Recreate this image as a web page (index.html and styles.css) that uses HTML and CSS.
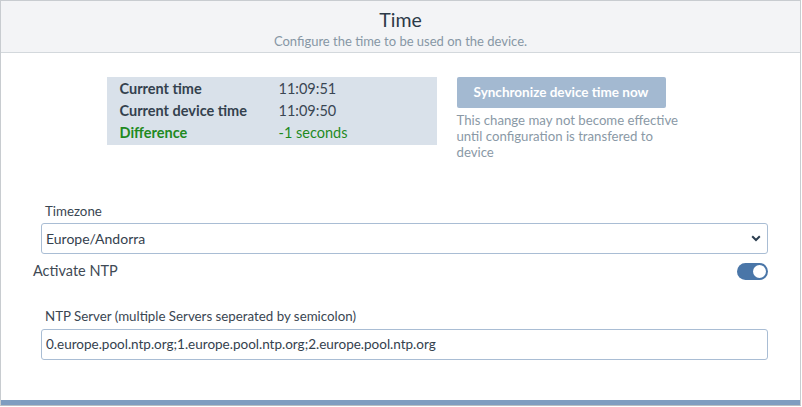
FILE: index.html
```html
<!DOCTYPE html>
<html>
<head>
<meta charset="utf-8">
<link rel="stylesheet" href="styles.css">
</head>
<body>
<div class="panel">
  <div class="header">
    <div class="title">Time</div>
    <div class="subtitle">Configure the time to be used on the device.</div>
  </div>
  <div class="content">
    <div class="info-row">
      <div class="info-box">
        <div class="irow"><span class="lbl">Current time</span><span class="val">11:09:51</span></div>
        <div class="irow"><span class="lbl">Current device time</span><span class="val">11:09:50</span></div>
        <div class="irow diff"><span class="lbl">Difference</span><span class="val">-1 seconds</span></div>
      </div>
      <div class="sync">
        <div class="btn">Synchronize device time now</div>
        <div class="help">This change may not become effective until configuration is transfered to device</div>
      </div>
    </div>
    <div class="group tz">
      <div class="flabel">Timezone</div>
      <div class="field select">
        <span>Europe/Andorra</span>
        <svg class="chev" width="10" height="7" viewBox="0 0 10 7"><path d="M1.2 1.3 L5 5 L8.8 1.3" fill="none" stroke="#2c3e50" stroke-width="2"/></svg>
      </div>
    </div>
    <div class="ntp-row">
      <span class="ntp-label">Activate NTP</span>
      <span class="toggle"><span class="knob"></span></span>
    </div>
    <div class="group ntp">
      <div class="flabel">NTP Server (multiple Servers seperated by semicolon)</div>
      <div class="field">0.europe.pool.ntp.org;1.europe.pool.ntp.org;2.europe.pool.ntp.org</div>
    </div>
  </div>
  <div class="footer"></div>
</div>
</body>
</html>
```
FILE: styles.css
```css
html, body {
  margin: 0;
  padding: 0;
  background: #ffffff;
}
body {
  font-family: Lato, "Liberation Sans", sans-serif;
  color: #2f3d4b;
  width: 802px;
  height: 407px;
  overflow: hidden;
}
.panel {
  width: 801px;
  height: 406px;
  box-sizing: border-box;
  border: 1px solid #c8ccd0;
  border-bottom: 1px solid #b9bec3;
  display: flex;
  flex-direction: column;
}
.header {
  height: 52px;
  box-sizing: border-box;
  background: #f3f4f6;
  border-bottom: 1px solid #d3d8dc;
  text-align: center;
  padding-top: 7px;
}
.title {
  font-size: 19.5px;
  line-height: 24px;
  color: #2c3a48;
}
.subtitle {
  font-size: 13px;
  line-height: 18px;
  color: #8797a5;
}
.content {
  flex: 1;
  padding: 24px 32px 0 32px;
}
.info-row {
  display: flex;
  justify-content: center;
  gap: 20px;
  padding-right: 2px;
}
.info-box {
  width: 330px;
  height: 68px;
  box-sizing: border-box;
  background: #d9e1ea;
  padding: 1px 13px;
}
.irow {
  display: flex;
  font-size: 14.5px;
  line-height: 22px;
}
.lbl {
  width: 159px;
  font-weight: 700;
  color: #34414e;
}
.val {
  color: #3a4653;
}
.diff .lbl, .diff .val {
  color: #1f8a1f;
}
.sync {
  width: 236px;
}
.btn {
  width: 209px;
  height: 31px;
  box-sizing: border-box;
  background: #a3b9d1;
  border-radius: 2px;
  color: #ffffff;
  font-weight: 700;
  font-size: 13.5px;
  line-height: 31px;
  text-align: center;
}
.help {
  margin-top: 4px;
  font-size: 13.2px;
  line-height: 16px;
  color: #8a99a6;
  width: 230px;
}
.group {
  padding: 0 0 0 8px;
}
.tz {
  margin-top: 42px;
}
.flabel {
  font-size: 13.3px;
  line-height: 18px;
  color: #3a4652;
  padding-left: 4px;
  margin-bottom: 3px;
}
.field {
  height: 31px;
  box-sizing: border-box;
  border: 1px solid #a9bdd4;
  border-radius: 3px;
  font-size: 13.5px;
  line-height: 29px;
  padding: 0 5px 0 4px;
  color: #34414e;
}
.select {
  display: flex;
  align-items: center;
  justify-content: space-between;
  padding-right: 6px;
  font-size: 14px;
}
.chev {
  display: block;
}
.ntp-row {
  margin-top: 7px;
  height: 20px;
  display: flex;
  align-items: center;
  justify-content: space-between;
}
.ntp-label {
  font-size: 14.5px;
  line-height: 20px;
  color: #3f4a55;
}
.toggle {
  position: relative;
  width: 31px;
  height: 17px;
  border-radius: 9px;
  background: #4a76a8;
}
.knob {
  position: absolute;
  right: 2px;
  top: 2px;
  width: 13px;
  height: 13px;
  border-radius: 50%;
  background: #ffffff;
}
.ntp {
  margin-top: 26px;
}
.ntp .flabel {
  margin-bottom: 4px;
}
.footer {
  height: 5px;
  background: #7f9dc0;
}
```
